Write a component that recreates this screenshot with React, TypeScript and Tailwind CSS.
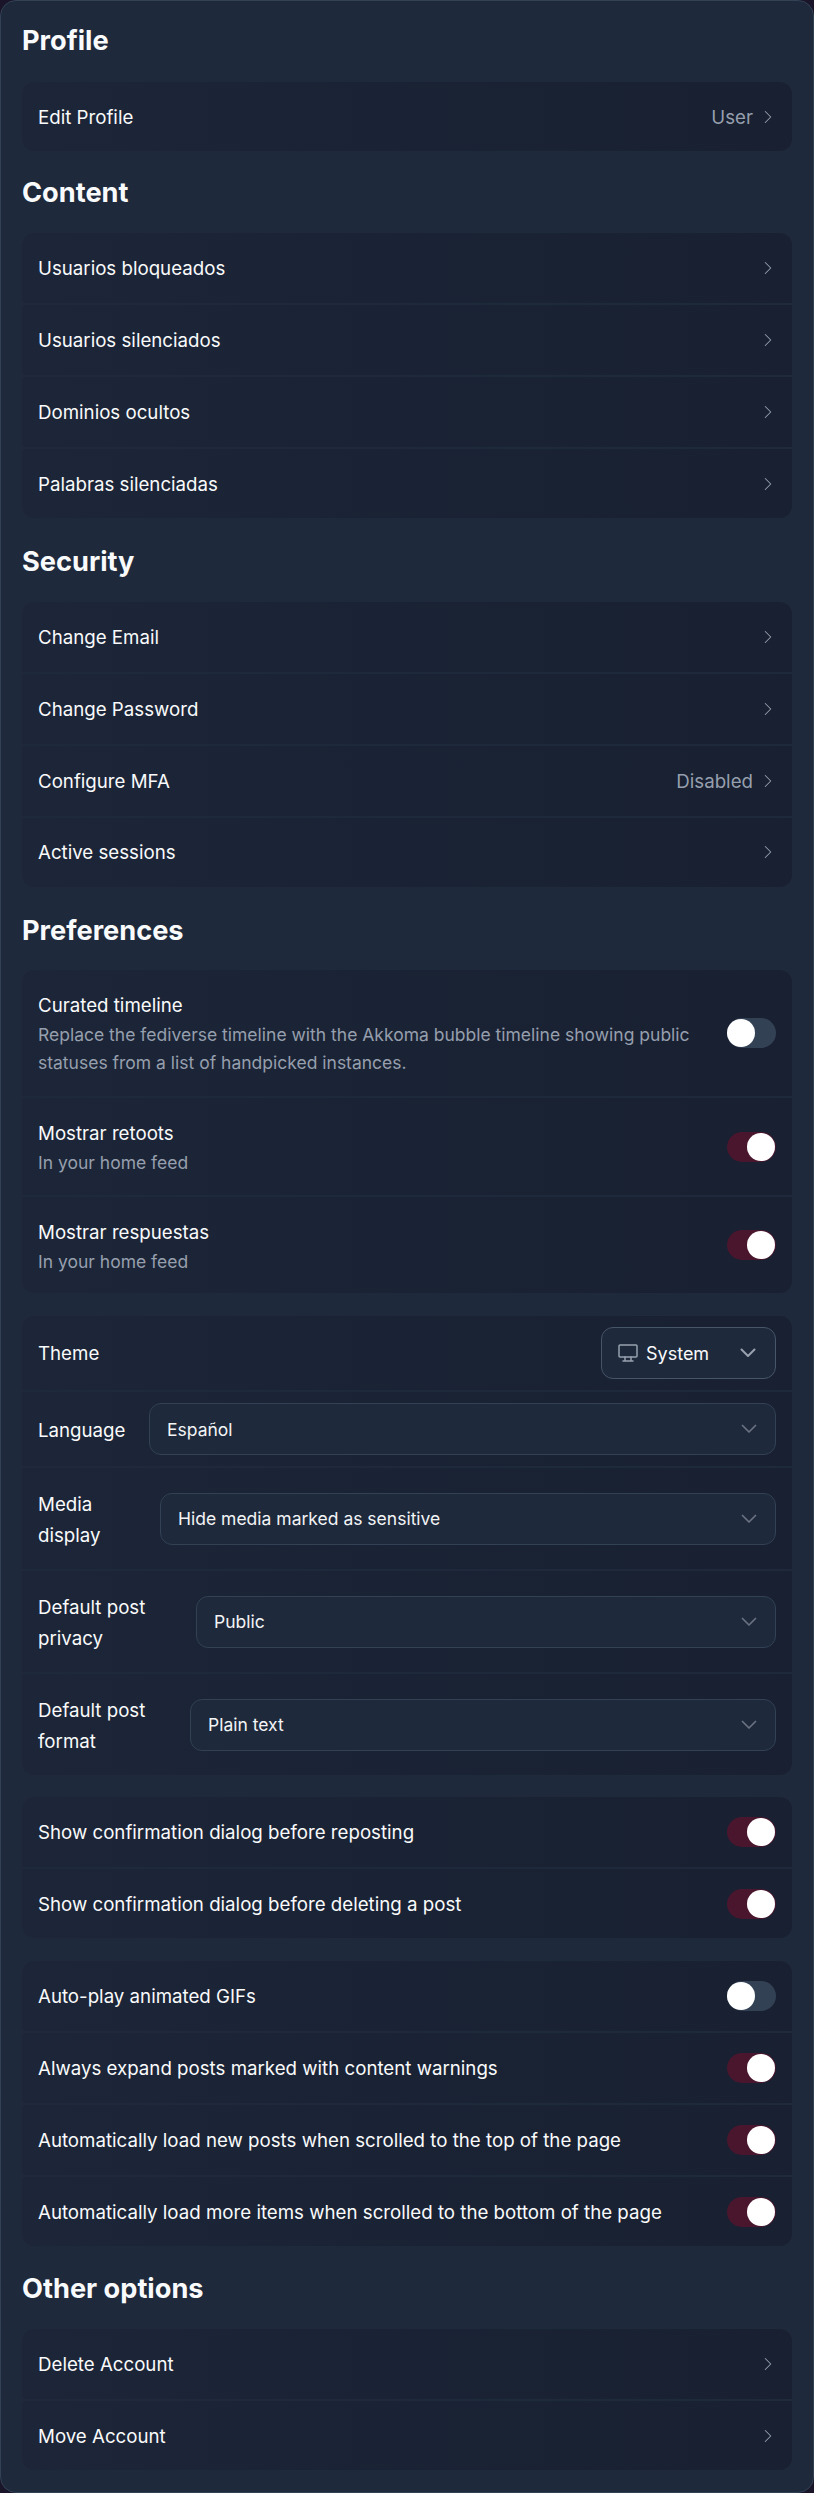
function Chevron() {
  return (
    <svg className="w-[22px] h-[22px] flex-none text-gray-400" viewBox="0 0 24 24" fill="none" stroke="currentColor" strokeWidth="1.1" strokeLinecap="round" strokeLinejoin="round">
      <path d="M9 6l6 6l-6 6" />
    </svg>
  );
}

function ChevronDown({ className, weight }: { className: string; weight: string }) {
  return (
    <svg className={className} viewBox="0 0 20 20" fill="none" stroke="currentColor" strokeWidth={weight} strokeLinecap="round" strokeLinejoin="round">
      <path d="M3.5 6.5l6.5 6.5l6.5-6.5" />
    </svg>
  );
}

function Heading({ title, spacing }: { title: string; spacing: string }) {
  return <h2 className={`${spacing} text-[27.2px] leading-8 font-bold text-[#f9fafb]`}>{title}</h2>;
}

function Card({ children, className = "" }: { children: React.ReactNode; className?: string }) {
  return (
    <div className={`rounded-xl bg-gradient-to-r from-[#1c2638] to-[#182031] overflow-hidden divide-y-2 divide-[#1e293b] ${className}`}>
      {children}
    </div>
  );
}

function NavRow({ label, value }: { label: string; value?: string }) {
  return (
    <div className="box-content h-[70px] last:h-[69.4px] flex items-center justify-between pl-4 pr-[13px]">
      <span className="pt-[2px] text-[18.7px] text-[#f9fafb]">{label}</span>
      <div className="flex items-center gap-1">
        {value && <span className="pt-[2px] text-[18.7px] text-[#969fad]">{value}</span>}
        <Chevron />
      </div>
    </div>
  );
}

function Toggle({ on }: { on: boolean }) {
  return (
    <div className={`w-[49px] h-[30px] flex-none rounded-full flex items-center ${on ? "bg-[#4a162e] justify-end pr-px" : "bg-[#334155] justify-start"}`}>
      <div className="w-[28px] h-[28px] rounded-full bg-white" />
    </div>
  );
}

function ToggleRow({ label, hint, on, height = "h-[70px] last:h-[69.4px]", textClass = "pt-[2px]" }: { label: string; hint?: string; on: boolean; height?: string; textClass?: string }) {
  return (
    <div className={`box-content ${height} flex items-center justify-between gap-8 px-4`}>
      <div className={textClass}>
        <div className="text-[18.7px] leading-[30px] text-[#f9fafb]">{label}</div>
        {hint && <div className="text-[17.5px] leading-7 text-[#969fad] max-w-[670px]">{hint}</div>}
      </div>
      <Toggle on={on} />
    </div>
  );
}

function SelectRow({ label, value, labelWidth, height }: { label: string; value: string; labelWidth: string; height: string }) {
  return (
    <div className={`box-content ${height} flex items-center gap-[22px] px-4`}>
      <div className={`${labelWidth} flex-none pt-[2px] text-[18.7px] leading-[31px] text-[#f9fafb]`}>{label}</div>
      <div className="flex-1 h-[52px] rounded-xl border border-[#334155] bg-[#1e293b] flex items-center justify-between pl-[17px] pr-4">
        <span className="pt-[2px] text-[17.5px] text-[#f3f4f6]">{value}</span>
        <ChevronDown className="w-5 h-5 text-gray-500" weight="1.7" />
      </div>
    </div>
  );
}

export default function App() {
  return (
    <div className="min-h-screen bg-[#1a1528]" style={{ fontFamily: "Inter, sans-serif" }}>
      <main className="h-[2493px] rounded-2xl border border-[#334155] bg-[#1e293b] px-[21px] pt-[24px]">
        <Heading title="Profile" spacing="mb-[25px]" />
        <Card>
          <NavRow label="Edit Profile" value="User" />
        </Card>

        <Heading title="Content" spacing="mt-[26px] mb-[23.6px]" />
        <Card>
          <NavRow label="Usuarios bloqueados" />
          <NavRow label="Usuarios silenciados" />
          <NavRow label="Dominios ocultos" />
          <NavRow label="Palabras silenciadas" />
        </Card>

        <Heading title="Security" spacing="mt-[28px] mb-[23.3px]" />
        <Card>
          <NavRow label="Change Email" />
          <NavRow label="Change Password" />
          <NavRow label="Configure MFA" value="Disabled" />
          <NavRow label="Active sessions" />
        </Card>

        <Heading title="Preferences" spacing="mt-[28px] mb-[23px]" />
        <Card>
          <ToggleRow height="h-[126px]" textClass="pt-[2px]" label="Curated timeline" hint="Replace the fediverse timeline with the Akkoma bubble timeline showing public statuses from a list of handpicked instances." on={false} />
          <ToggleRow height="h-[97px]" textClass="pt-[2px]" label="Mostrar retoots" hint="In your home feed" on />
          <ToggleRow height="h-[96px]" textClass="pt-[4px]" label="Mostrar respuestas" hint="In your home feed" on />
        </Card>

        <Card className="mt-[23px]">
          <div className="box-content h-[74px] flex items-center justify-between px-4">
            <span className="pt-[2px] text-[18.7px] text-[#f9fafb]">Theme</span>
            <div className="w-[175px] h-[52px] rounded-xl border border-[#475569] bg-[#1e293b] flex items-center justify-between pl-[14px] pr-[17px]">
              <div className="flex items-center gap-[6px]">
                <svg className="w-6 h-6 text-gray-400" viewBox="0 0 24 24" fill="none" stroke="currentColor" strokeWidth="1.5" strokeLinecap="round" strokeLinejoin="round">
                  <path d="M3 5a1 1 0 0 1 1-1h16a1 1 0 0 1 1 1v10a1 1 0 0 1-1 1H4a1 1 0 0 1-1-1z" />
                  <path d="M7 20h10M9 16v4M15 16v4" />
                </svg>
                <span className="text-[18px] text-[#f9fafb]">System</span>
              </div>
              <ChevronDown className="w-5 h-5 text-gray-400" weight="2" />
            </div>
          </div>
          <SelectRow height="h-[74px]" labelWidth="w-[89px]" label="Language" value="Español" />
          <SelectRow height="h-[101px]" labelWidth="w-[100px]" label="Media display" value="Hide media marked as sensitive" />
          <SelectRow height="h-[101px]" labelWidth="w-[136px]" label="Default post privacy" value="Public" />
          <SelectRow height="h-[101px]" labelWidth="w-[130px]" label="Default post format" value="Plain text" />
        </Card>

        <Card className="mt-[22px]">
          <ToggleRow label="Show confirmation dialog before reposting" on />
          <ToggleRow label="Show confirmation dialog before deleting a post" on />
        </Card>

        <Card className="mt-[22.6px]">
          <ToggleRow label="Auto-play animated GIFs" on={false} />
          <ToggleRow label="Always expand posts marked with content warnings" on />
          <ToggleRow label="Automatically load new posts when scrolled to the top of the page" on />
          <ToggleRow label="Automatically load more items when scrolled to the bottom of the page" on />
        </Card>

        <Heading title="Other options" spacing="mt-[26.6px] mb-[24px]" />
        <Card>
          <NavRow label="Delete Account" />
          <NavRow label="Move Account" />
        </Card>
      </main>
    </div>
  );
}
